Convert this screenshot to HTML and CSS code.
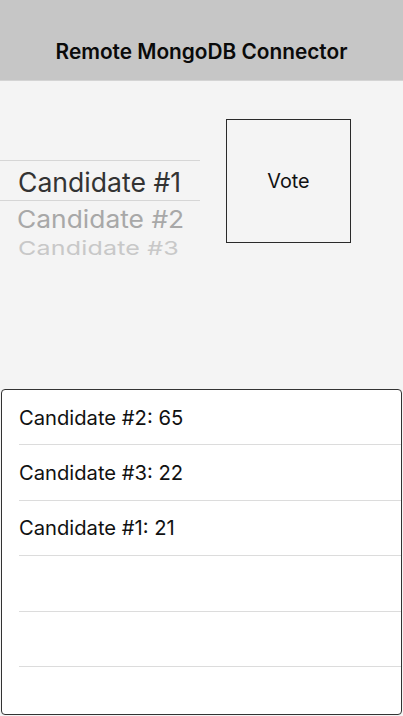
FILE: index.html
```html
<!DOCTYPE html>
<html>
<head>
<meta charset="utf-8">
<link rel="stylesheet" href="styles.css">
</head>
<body>
<div class="app">
  <header class="navbar"><span class="title">Remote MongoDB Connector</span></header>
  <main class="main">
    <div class="picker">
      <div class="pick selected"><span>Candidate #1</span></div>
      <div class="pick second"><span>Candidate #2</span></div>
      <div class="pick third"><span>Candidate #3</span></div>
    </div>
    <div class="vote">Vote</div>
  </main>
  <section class="table">
    <div class="row"><span>Candidate #2: 65</span></div>
    <div class="row"><span>Candidate #3: 22</span></div>
    <div class="row"><span>Candidate #1: 21</span></div>
    <div class="row"></div>
    <div class="row"></div>
    <div class="row last"></div>
  </section>
</div>
</body>
</html>
```
FILE: styles.css
```css
html, body { margin: 0; padding: 0; }
body {
  width: 403px;
  height: 716px;
  overflow: hidden;
  background: #f4f4f4;
  font-family: Inter, "Liberation Sans", sans-serif;
  color: #111;
}
.app { display: flex; flex-direction: column; height: 716px; }
.navbar {
  height: 81px;
  background: #c6c6c6;
  border-bottom: 1px solid #d4d4d4;
  box-sizing: border-box;
  display: flex;
  align-items: flex-end;
  justify-content: center;
  padding-bottom: 15px;
}
.title { font-size: 20.8px; font-weight: 600; letter-spacing: 0; color: #0a0a0a; line-height: 1.2; }
.main {
  height: 308px;
  display: flex;
  align-items: flex-start;
}
.picker {
  width: 200px;
  margin-top: 79px;
  height: 99px;
  overflow: hidden;
  display: flex;
  flex-direction: column;
}
.pick { display: flex; align-items: center; padding-left: 18px; flex: none; box-sizing: border-box; }
.pick span { display: block; white-space: nowrap; line-height: 1; }
.selected {
  height: 41px;
  border-top: 1px solid #d6d6d6;
  border-bottom: 1px solid #d6d6d6;
  font-size: 26.6px;
  color: #333;
  padding-top: 3px;
}
.second {
  height: 34px;
  font-size: 26.4px;
  color: #a8a8a8;
  padding-left: 17px;
  padding-top: 3px;
}
.second span { transform: scaleY(0.92); }
.third {
  height: 24px;
  font-size: 25px;
  color: #c8c8c8;
  letter-spacing: 0.2px;
  align-items: flex-start;
  padding-top: 4px;
}
.third span { transform: scaleY(0.77); transform-origin: top; }
.vote {
  margin-top: 38px;
  margin-left: 26px;
  width: 125px;
  height: 124px;
  box-sizing: border-box;
  border: 1px solid #2a2a2a;
  display: flex;
  align-items: center;
  justify-content: center;
  font-size: 19.8px;
  color: #111;
}
.table {
  margin: 0 1px;
  height: 326px;
  box-sizing: border-box;
  border: 1px solid #333;
  border-radius: 4px;
  background: #fff;
  overflow: hidden;
}
.row {
  height: 55.4px;
  box-sizing: border-box;
  margin-left: 17px;
  border-bottom: 1px solid #dcdcdc;
  display: flex;
  align-items: center;
  font-size: 20.2px;
  color: #111;
}
.row.last { border-bottom: none; }
```
